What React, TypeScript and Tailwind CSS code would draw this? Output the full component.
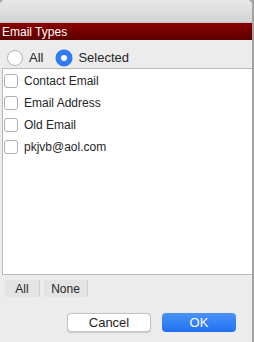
import { useState } from 'react'

const ITEMS = ['Contact Email', 'Email Address', 'Old Email', 'pkjvb@aol.com']

function Radio({ checked }: { checked: boolean }) {
  if (checked) {
    return (
      <span className="flex h-[16px] w-[16px] items-center justify-center rounded-full bg-[#2f7cf6] shadow-[0_0_0_0.5px_#2a6fe0]">
        <span className="h-[6px] w-[6px] rounded-full bg-white" />
      </span>
    )
  }
  return <span className="h-[16px] w-[16px] rounded-full border border-[#b5b5b5] bg-white" />
}

export default function App() {
  const [mode, setMode] = useState<'all' | 'selected'>('selected')
  const [checked, setChecked] = useState<boolean[]>(ITEMS.map(() => false))

  return (
    <div className="flex h-[342px] w-[254px] bg-[#a3a3a3] font-['Liberation_Sans',sans-serif] text-[12px] text-[#262626]">
      <div className="flex h-full w-[252px] flex-col overflow-hidden rounded-t-[5px] bg-[#ececec]">
        {/* Title bar */}
        <div className="h-[23px] shrink-0 border-b border-[#c4c4c4] bg-gradient-to-b from-[#e8e8e8] to-[#d4d4d4]" />

        {/* Header */}
        <div className="flex h-[17px] shrink-0 items-center bg-gradient-to-b from-[#8c0000] to-[#5c0000] px-[2px] text-[12px] leading-none text-white">
          Email Types
        </div>

        {/* Radio row */}
        <div className="flex h-[28px] shrink-0 items-start pl-[7px] pt-[8px]">
          <button className="flex items-center gap-[6px]" onClick={() => setMode('all')}>
            <Radio checked={mode === 'all'} />
            <span className="text-[13px]">All</span>
          </button>
          <button className="ml-[13px] flex items-center gap-[6px]" onClick={() => setMode('selected')}>
            <Radio checked={mode === 'selected'} />
            <span className="text-[13px]">Selected</span>
          </button>
        </div>

        {/* List */}
        <div className="ml-[2px] flex h-[207px] shrink-0 flex-col border-t border-l border-b border-[#b9b9b9] bg-white pt-[1px]">
          {ITEMS.map((item, i) => (
            <label key={item} className="flex h-[22px] items-center gap-[6px] pl-[1px]">
              <input
                type="checkbox"
                className="h-[14px] w-[14px] appearance-none rounded-[3px] border border-[#b0b0b0] bg-white"
                checked={checked[i]}
                onChange={() => setChecked(checked.map((c, j) => (j === i ? !c : c)))}
              />
              <span>{item}</span>
            </label>
          ))}
        </div>

        {/* All / None */}
        <div className="mt-[5px] flex pl-[5px]">
          <button className="flex h-[17px] w-[35px] items-center justify-center border-r border-[#cfcfcf] bg-[#e4e4e4]">
            All
          </button>
          <button className="ml-[4px] flex h-[17px] w-[44px] items-center justify-center border-r border-[#cfcfcf] bg-[#e4e4e4]">
            None
          </button>
        </div>

        {/* Footer */}
        <div className="mt-[16px] flex gap-[11px] pl-[67px]">
          <button className="flex h-[19px] w-[84px] items-center justify-center rounded-[4px] border border-[#c6c6c6] bg-white text-[13px] shadow-[0_0.5px_1px_rgba(0,0,0,0.15)]">
            Cancel
          </button>
          <button className="flex h-[19px] w-[74px] items-center justify-center rounded-[4px] bg-gradient-to-b from-[#4b93f8] to-[#1f6ff0] text-[13px] text-white">
            OK
          </button>
        </div>
      </div>
    </div>
  )
}
